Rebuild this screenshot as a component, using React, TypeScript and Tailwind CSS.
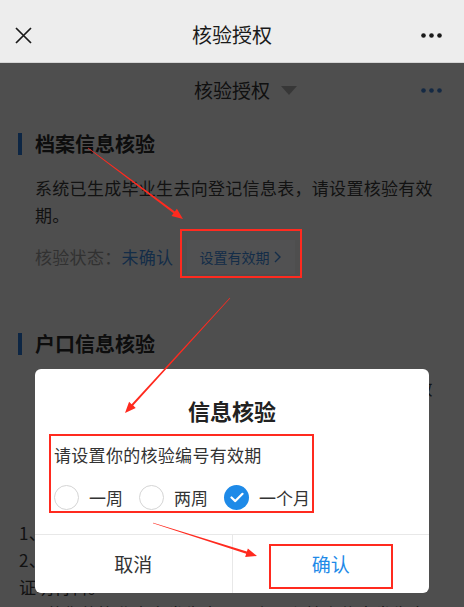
import React from "react";

type Pt = { x: number; y: number };

// tapered red annotation arrow
const Arrow = ({ from, to }: { from: Pt; to: Pt }) => {
  const dx = to.x - from.x;
  const dy = to.y - from.y;
  const len = Math.hypot(dx, dy);
  const ux = dx / len;
  const uy = dy / len;
  const px = -uy;
  const py = ux;
  const head = 11;
  const hw = 4.5;
  const bx = to.x - ux * head;
  const by = to.y - uy * head;
  const w0 = 0.3;
  const w1 = 1.1;
  const pts = [
    [from.x + px * w0, from.y + py * w0],
    [bx + px * w1, by + py * w1],
    [bx + px * hw, by + py * hw],
    [to.x, to.y],
    [bx - px * hw, by - py * hw],
    [bx - px * w1, by - py * w1],
    [from.x - px * w0, from.y - py * w0],
  ];
  return (
    <polygon
      points={pts.map((p) => p.join(",")).join(" ")}
      fill="#ff2a1f"
    />
  );
};

const Dots = ({ color }: { color: string }) => (
  <svg width="21" height="5" viewBox="0 0 21 5">
    <circle cx="2.5" cy="2.5" r="2.3" fill={color} />
    <circle cx="10.5" cy="2.5" r="2.3" fill={color} />
    <circle cx="18.5" cy="2.5" r="2.3" fill={color} />
  </svg>
);

const Section = ({
  title,
  text,
}: {
  title: string;
  text: string;
}) => (
  <section className="pt-[15px] pb-[44px] pl-[18px] pr-[18px]">
    <div className="flex items-center gap-[13px]">
      <span className="h-[22px] w-[4px] bg-[#2a78d2]" />
      <h2 className="text-[20px] font-bold leading-[22px] text-[#2a2a2a]">
        {title}
      </h2>
    </div>
    <p className="mt-[19px] pl-[17px] text-[17px] leading-[27px] tracking-[0.3px] text-[#3a3a3a]">
      {text}
    </p>
    <div className="mt-[12px] flex items-center pl-[17px] text-[17px] tracking-[0.3px]">
      <span className="text-[#9a9a9a]">核验状态：</span>
      <span className="text-[#3f8be0]">未确认</span>
      <button className="ml-[14px] flex h-[34px] items-center gap-[5px] bg-[#fafcff] pl-[12px] pr-[14px] text-[14px] tracking-normal text-[#3f8be0]">
        设置有效期
        <svg width="7" height="12" viewBox="0 0 7 12">
          <path
            d="M1 1l5 5-5 5"
            fill="none"
            stroke="#3f8be0"
            strokeWidth="1.4"
          />
        </svg>
      </button>
    </div>
  </section>
);

const Radio = ({ label, checked }: { label: string; checked?: boolean }) => (
  <label className="mr-[16px] flex items-center">
    {checked ? (
      <span className="flex h-[25px] w-[25px] items-center justify-center rounded-full bg-[#1e8ae8]">
        <svg width="14" height="11" viewBox="0 0 14 11">
          <path
            d="M1.5 5.5l3.8 3.6L12.5 1.8"
            fill="none"
            stroke="#fff"
            strokeWidth="2.2"
            strokeLinecap="round"
            strokeLinejoin="round"
          />
        </svg>
      </span>
    ) : (
      <span className="h-[25px] w-[25px] rounded-full border border-[#d4d4d4]" />
    )}
    <span className="ml-[10px] text-[17px] leading-[25px] text-[#333]">
      {label}
    </span>
  </label>
);

export default function App() {
  return (
    <div className="relative h-[607px] w-[464px] overflow-hidden bg-[#f2f2f2] font-['Noto_Sans_CJK_SC',sans-serif] text-[#333]">
      <header className="grid h-[63px] grid-cols-[1fr_auto_1fr] items-center border-b border-[#d6d6d6] bg-[#ededed] px-[15px] pt-[8px]">
        <svg width="17" height="17" viewBox="0 0 17 17">
          <path
            d="M1 1l15 15M16 1L1 16"
            stroke="#1a1a1a"
            strokeWidth="1.7"
            fill="none"
          />
        </svg>
        <h1 className="text-[20px] leading-[28px] text-[#1a1a1a]">核验授权</h1>
        <div className="mr-[7px] flex justify-self-end">
          <Dots color="#1a1a1a" />
        </div>
      </header>

      <main>
        <div className="grid h-[55px] grid-cols-[1fr_auto_1fr] items-center px-[22px]">
          <span />
          <span className="text-[19px] text-[#333]">核验授权</span>
          <div className="flex items-center justify-between pl-[11px]">
            <svg width="16" height="9" viewBox="0 0 16 9">
              <path d="M0 0h16L8 9z" fill="#aaa" />
            </svg>
            <Dots color="#3f7fd0" />
          </div>
        </div>

        <Section
          title="档案信息核验"
          text="系统已生成毕业生去向登记信息表，请设置核验有效期。"
        />
        <Section
          title="户口信息核验"
          text="系统已生成毕业生户口迁移信息表，请设置核验有效期。"
        />

        <div className="pt-[1px] pl-[19px] pr-[35px] text-[17px] leading-[27px] tracking-[0.3px] text-[#3a3a3a]">
          <p>1、核验编号有效期内可多次使用。</p>
          <p>2、用人单位可凭核验编号查询您的去向登记信息及其证明材料。</p>
          <p>3、若您的毕业去向发生变更，户口和档案信息发生变更，需要重新核验。</p>
        </div>
      </main>

      <div className="absolute inset-x-0 top-[63px] bottom-0 bg-black/[0.68]" />

      <div className="absolute top-[369px] left-[35px] w-[394px] overflow-hidden rounded-[6px] bg-white">
        <h3 className="pt-[26px] text-center text-[22px] font-bold leading-[30px] text-[#222]">
          信息核验
        </h3>
        <div className="px-[19px] pt-[17px] pb-[24px]">
          <p className="text-[17px] leading-[26px] tracking-[0.3px] text-[#333]">
            请设置你的核验编号有效期
          </p>
          <div className="mt-[17px] flex items-center">
            <Radio label="一周" />
            <Radio label="两周" />
            <Radio label="一个月" checked />
          </div>
        </div>
        <div className="flex h-[59px] border-t border-[#e8e8e8] text-[19px]">
          <button className="flex flex-1 items-center justify-center text-[#333]">
            取消
          </button>
          <button className="flex flex-1 items-center justify-center border-l border-[#e8e8e8] text-[#1e8ae8]">
            确认
          </button>
        </div>
      </div>

      <div className="absolute top-[229px] left-[180px] h-[49px] w-[122px] border-2 border-[#ff2a1f]" />
      <div className="absolute top-[434px] left-[49px] h-[79px] w-[265px] border-2 border-[#ff2a1f]" />
      <div className="absolute top-[544px] left-[269px] h-[45px] w-[124px] border-2 border-[#ff2a1f]" />

      <svg
        className="pointer-events-none absolute inset-0"
        width="464"
        height="607"
        viewBox="0 0 464 607"
      >
        <Arrow from={{ x: 88, y: 148 }} to={{ x: 183, y: 219 }} />
        <Arrow from={{ x: 230, y: 298 }} to={{ x: 125, y: 413 }} />
        <Arrow from={{ x: 153, y: 523 }} to={{ x: 257, y: 556 }} />
      </svg>
    </div>
  );
}
